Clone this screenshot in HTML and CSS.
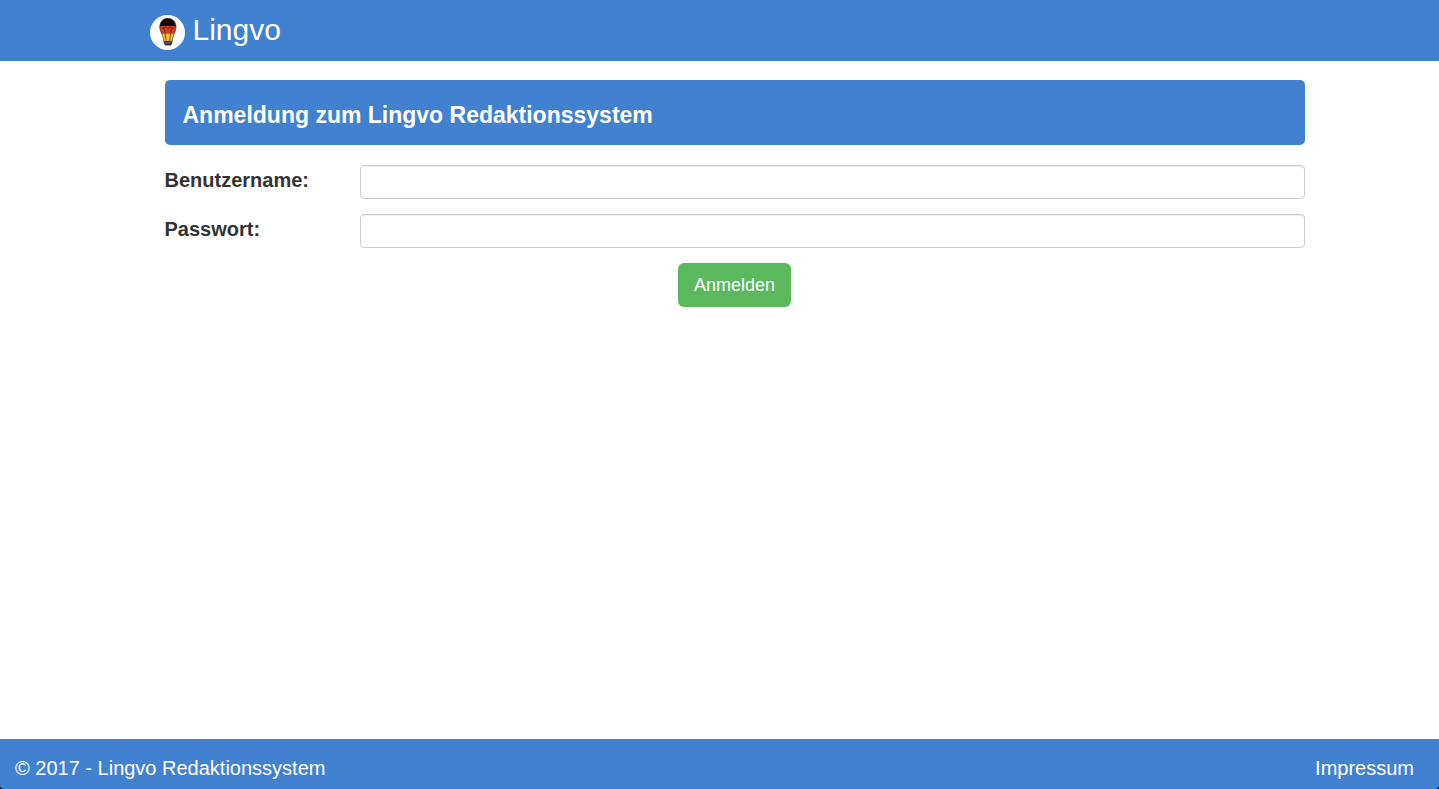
FILE: index.html
```html
<!DOCTYPE html>
<html lang="de">
<head>
<meta charset="utf-8">
<meta name="viewport" content="width=device-width, initial-scale=1">
<title>Lingvo Redaktionssystem</title>
<link rel="stylesheet" href="styles.css">
</head>
<body>
<div class="page">
  <header class="topbar">
    <div class="container topbar-inner">
      <a class="brand" href="#">
        <svg class="logo" viewBox="0 0 35 35" aria-hidden="true">
          <circle cx="17.500" cy="17.500" r="17.500" fill="#fff"/>
          <clipPath id="bulb"><path d="M17.800 3.300C13 3.300 9.800 7 9.800 12c0 5.500 3.600 7.500 4 14.500h8.400c.4-7 3.800-9 3.800-14.500C26 7 22.600 3.300 17.800 3.300z"/></clipPath>
          <g clip-path="url(#bulb)">
            <path fill="#0b0708" d="M8 3h20v9H8z"/>
            <path fill="#d83a26" d="M8 11.500q9.500-1.500 20 0V20H8z"/>
            <path fill="#f4c22b" d="M8 18.800h20V27H8z"/>
            <path fill="none" stroke="#54200f" stroke-width=".7" d="M16.300 26l-2-12-1.800-1 3-.8 2.300 1.300 2.200-1.300 3 .8-1.800 1L19.700 26"/>
          </g>
          <path fill="none" stroke="#3a1814" stroke-width=".6" d="M17.800 3.300C13 3.300 9.800 7 9.800 12c0 5.500 3.600 7.500 4 14.500h8.400c.4-7 3.800-9 3.800-14.500C26 7 22.600 3.300 17.800 3.300z"/>
          <path fill="#3b3b3b" d="M13.800 26h8.400v3l-1.500 1.500h-5L13.800 29z"/>
          <path stroke="#777" stroke-width=".6" d="M14 28.300l7.500-1"/>
        </svg>
        <span>Lingvo</span>
      </a>
    </div>
  </header>
  <main class="container content">
    <h1 class="panel-title">Anmeldung zum Lingvo Redaktionssystem</h1>
    <form class="login">
      <div class="field">
        <label for="user">Benutzername:</label>
        <input id="user" type="text">
      </div>
      <div class="field">
        <label for="pass">Passwort:</label>
        <input id="pass" type="password">
      </div>
      <button class="submit" type="button">Anmelden</button>
    </form>
  </main>
  <div class="footer-edge">
    <footer class="footer">
      <span>© 2017 - Lingvo Redaktionssystem</span>
      <a href="#">Impressum</a>
    </footer>
  </div>
</div>
</body>
</html>
```
FILE: styles.css
```css
* { box-sizing: border-box; }
body {
  margin: 0;
  background: #fff;
  color: #333;
  font-family: "Liberation Sans", Arial, sans-serif;
  font-size: 20px;
  line-height: 28px;
}
.page {
  display: flex;
  flex-direction: column;
  min-height: 100vh;
}
.container {
  width: 100%;
  max-width: 1170px;
  margin: 0 auto;
}
.topbar {
  background: #4281d0;
  padding: 10px 0 11px;
}
.topbar-inner {
  display: flex;
  padding-left: 15px;
}
.brand {
  display: flex;
  gap: 8px;
  color: #fff;
  font-size: 30px;
  line-height: 40px;
  text-decoration: none;
}
.logo {
  width: 35px;
  height: 35px;
  margin-top: 5px;
}
.content {
  flex: 1;
  padding: 19px 0 20px 30px;
}
.panel-title {
  margin: 0 0 20px;
  padding: 21px 18px 16px;
  border-radius: 5px;
  background: #4281d0;
  color: #fff;
  font-size: 23px;
  font-weight: bold;
  line-height: 28px;
}
.login {
  display: flex;
  flex-direction: column;
  gap: 15px;
}
.field {
  display: grid;
  grid-template-columns: 195px 1fr;
}
.field label {
  font-weight: bold;
  line-height: 30px;
}
.field input {
  width: 100%;
  height: 34px;
  padding: 6px 12px;
  border: 1px solid #ccc;
  border-radius: 4px;
  background: #fff;
  box-shadow: inset 0 1px 1px rgba(0, 0, 0, .075);
  font: inherit;
  font-size: 14px;
}
.submit {
  align-self: center;
  padding: 10px 16px;
  border: 0;
  border-radius: 6px;
  background: #5cb85c;
  color: #fff;
  font: inherit;
  font-size: 18px;
  line-height: 24px;
}
.footer-edge { background: #000; }
.footer {
  display: flex;
  justify-content: space-between;
  padding: 15px 25px 7px 15px;
  border-radius: 0 0 4px 4px;
  background: #4281d0;
  color: #fff;
}
.footer a {
  color: inherit;
  text-decoration: none;
}
```
